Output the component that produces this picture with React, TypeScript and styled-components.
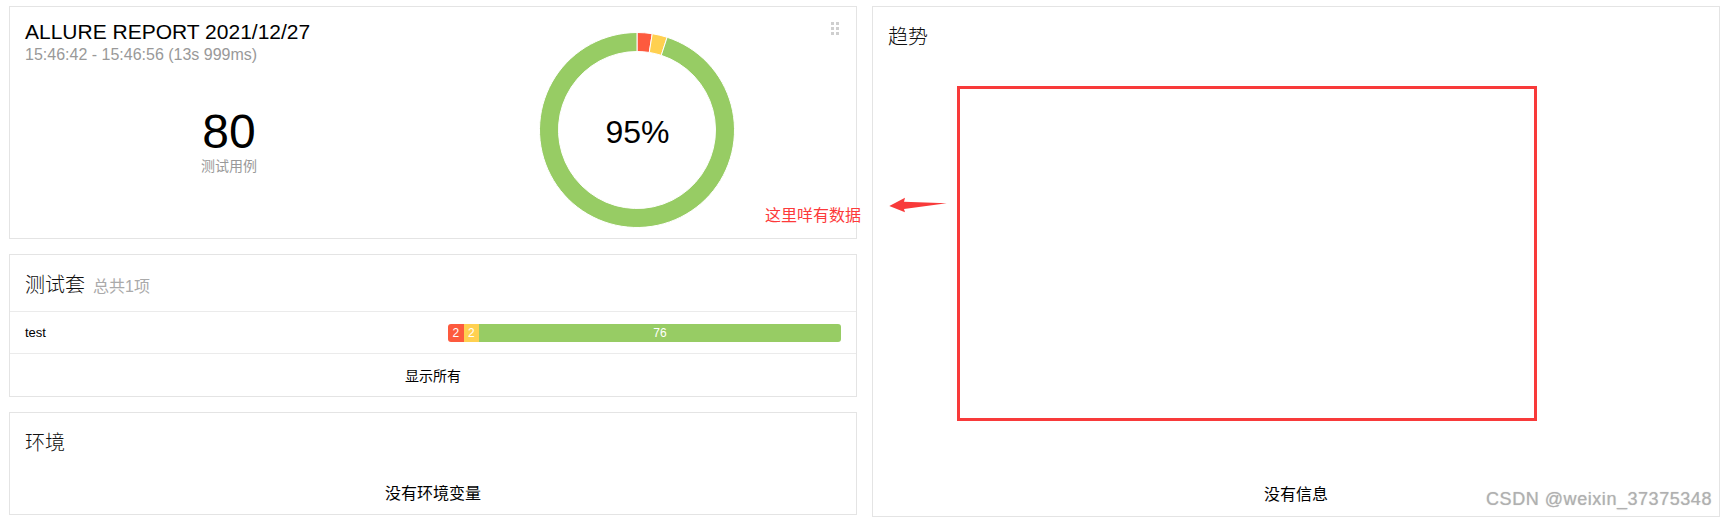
import React from "react";
import styled, { createGlobalStyle } from "styled-components";

const GlobalStyle = createGlobalStyle`
  html, body {
    margin: 0;
    padding: 0;
    background: #ffffff;
  }
  body {
    font-family: "Liberation Sans", Arial, "Noto Sans CJK SC", sans-serif;
    color: #000;
  }
  * { box-sizing: border-box; }
`;

const Page = styled.div`
  position: relative;
  display: flex;
  gap: 15px;
  height: 520px;
  padding: 6px 8px 0 9px;
  overflow: hidden;
`;

const Column = styled.div`
  display: flex;
  flex-direction: column;
  gap: 15px;
  width: 848px;
  flex: 0 0 848px;
`;

const Panel = styled.section<{ $height?: number }>`
  position: relative;
  display: flex;
  flex-direction: column;
  background: #fff;
  border: 1px solid #e4e4e4;
  ${(p) => (p.$height ? `height: ${p.$height}px;` : "")}
`;

const SummaryGrid = styled.div`
  display: grid;
  grid-template-columns: 1fr 1fr;
  height: 100%;
  padding: 0 15px;
`;

const SummaryInfo = styled.div`
  padding-top: 13px;
`;

const ReportTitle = styled.h1`
  margin: 0;
  font-size: 21px;
  line-height: 24px;
  font-weight: 400;
  color: #000;
  white-space: nowrap;
`;

const ReportTime = styled.div`
  margin-top: 2px;
  font-size: 16px;
  line-height: 18px;
  color: #999;
  white-space: nowrap;
`;

const Stat = styled.div`
  margin-top: 44px;
  display: flex;
  flex-direction: column;
  align-items: center;
`;

const StatValue = styled.div`
  font-size: 48px;
  line-height: 48px;
  color: #000;
`;

const StatLabel = styled.div`
  margin-top: 1px;
  font-size: 14px;
  line-height: 16px;
  color: #999;
  font-family: "Noto Sans CJK SC", sans-serif;
`;

const ChartCell = styled.div`
  display: flex;
  justify-content: center;
  padding-top: 25px;
`;

const Grip = styled.div`
  position: absolute;
  top: 15px;
  right: 17px;
  display: grid;
  grid-template-columns: repeat(2, 3px);
  grid-auto-rows: 3px;
  gap: 2px;
`;

const GripDot = styled.span`
  width: 3px;
  height: 3px;
  background: #cfcfcf;
`;

const PanelHeader = styled.div<{ $divided?: boolean }>`
  display: flex;
  align-items: baseline;
  gap: 8px;
  height: 57px;
  padding: 18px 15px 0;
  border-bottom: ${(p) => (p.$divided ? "1px solid #ebebeb" : "none")};
  flex: 0 0 auto;
`;

const PanelTitle = styled.h2`
  margin: 0;
  font-size: 20px;
  line-height: 22px;
  font-weight: 300;
  color: #111;
  font-family: "Noto Sans CJK SC", sans-serif;
`;

const PanelCount = styled.span`
  font-size: 16px;
  line-height: 18px;
  color: #aaa;
  font-family: "Liberation Sans", "Noto Sans CJK SC", sans-serif;
`;

const SuiteRow = styled.div`
  display: flex;
  align-items: center;
  justify-content: space-between;
  height: 42px;
  padding: 0 15px;
  border-bottom: 1px solid #ebebeb;
`;

const SuiteName = styled.span`
  font-size: 13px;
  color: #000;
`;

const StatusBar = styled.div`
  display: flex;
  width: 393px;
  height: 18px;
  border-radius: 3px;
  overflow: hidden;
`;

const Segment = styled.span<{ $color: string; $count: number }>`
  display: flex;
  align-items: center;
  justify-content: center;
  flex: ${(p) => p.$count} 1 0;
  min-width: 15.5px;
  background: ${(p) => p.$color};
  color: #fff;
  font-size: 12px;
  line-height: 18px;
`;

const PanelFooter = styled.div<{ $height: number; $size: number }>`
  display: flex;
  align-items: center;
  justify-content: center;
  height: ${(p) => p.$height}px;
  font-size: ${(p) => p.$size}px;
  color: #000;
  font-family: "Noto Sans CJK SC", sans-serif;
  flex: 0 0 auto;
`;

const ChartArea = styled.div`
  flex: 1 1 auto;
`;

const AnnotationBox = styled.div`
  position: absolute;
  left: 957px;
  top: 86px;
  width: 580px;
  height: 335px;
  border: 3px solid #f83a3a;
  pointer-events: none;
`;

const AnnotationArrow = styled.svg`
  position: absolute;
  left: 888px;
  top: 196px;
`;

const AnnotationNote = styled.div`
  position: absolute;
  left: 765px;
  top: 205px;
  font-size: 16px;
  line-height: 18px;
  color: #fd3a3a;
  font-family: "Noto Sans CJK SC", sans-serif;
  white-space: nowrap;
`;

const Watermark = styled.div`
  position: absolute;
  right: 16px;
  top: 489px;
  font-size: 18px;
  line-height: 20px;
  letter-spacing: 0.55px;
  color: #b0b0b0;
  text-shadow: 0 0 1px rgba(110, 110, 110, 0.4);
  white-space: nowrap;
`;

type Slice = { value: number; color: string };

const slices: Slice[] = [
  { value: 2, color: "#fd5a3e" },
  { value: 2, color: "#ffd050" },
  { value: 76, color: "#97cc64" },
];

const C = 98;
const R_OUT = 97.5;
const R_IN = 78.5;

function arcPath(a0: number, a1: number): string {
  const pt = (r: number, a: number) =>
    `${(C + r * Math.sin(a)).toFixed(3)},${(C - r * Math.cos(a)).toFixed(3)}`;
  const large = a1 - a0 > Math.PI ? 1 : 0;
  return [
    `M${pt(R_OUT, a0)}`,
    `A${R_OUT},${R_OUT} 0 ${large} 1 ${pt(R_OUT, a1)}`,
    `L${pt(R_IN, a1)}`,
    `A${R_IN},${R_IN} 0 ${large} 0 ${pt(R_IN, a0)}`,
    "Z",
  ].join(" ");
}

function Donut() {
  const total = slices.reduce((s, x) => s + x.value, 0);
  let acc = 0;
  return (
    <svg width="196" height="196" viewBox="0 0 196 196">
      {slices.map((s, i) => {
        const a0 = (acc / total) * Math.PI * 2;
        acc += s.value;
        const a1 = (acc / total) * Math.PI * 2;
        return (
          <path key={i} d={arcPath(a0, a1)} fill={s.color} stroke="#fff" strokeWidth={1} />
        );
      })}
      <text
        x="98.5"
        y="111"
        textAnchor="middle"
        fontSize="32"
        fontFamily="'Liberation Sans', Arial, sans-serif"
        fill="#000"
      >
        95%
      </text>
    </svg>
  );
}

const suiteSegments = [
  { count: 2, color: "#fd5a3e" },
  { count: 2, color: "#ffd050" },
  { count: 76, color: "#97cc64" },
];

export default function App() {
  return (
    <>
      <GlobalStyle />
      <Page>
        <Column>
          <Panel $height={233}>
            <SummaryGrid>
              <SummaryInfo>
                <ReportTitle>ALLURE REPORT 2021/12/27</ReportTitle>
                <ReportTime>15:46:42 - 15:46:56 (13s 999ms)</ReportTime>
                <Stat>
                  <StatValue>80</StatValue>
                  <StatLabel>测试用例</StatLabel>
                </Stat>
              </SummaryInfo>
              <ChartCell>
                <Donut />
              </ChartCell>
            </SummaryGrid>
            <Grip>
              {Array.from({ length: 6 }).map((_, i) => (
                <GripDot key={i} />
              ))}
            </Grip>
          </Panel>

          <Panel>
            <PanelHeader $divided>
              <PanelTitle>测试套</PanelTitle>
              <PanelCount>总共1项</PanelCount>
            </PanelHeader>
            <SuiteRow>
              <SuiteName>test</SuiteName>
              <StatusBar>
                {suiteSegments.map((s, i) => (
                  <Segment key={i} $color={s.color} $count={s.count}>
                    {s.count}
                  </Segment>
                ))}
              </StatusBar>
            </SuiteRow>
            <PanelFooter $height={42} $size={14}>
              显示所有
            </PanelFooter>
          </Panel>

          <Panel>
            <PanelHeader>
              <PanelTitle>环境</PanelTitle>
            </PanelHeader>
            <PanelFooter $height={44} $size={16}>
              没有环境变量
            </PanelFooter>
          </Panel>
        </Column>

        <Column>
          <Panel $height={511}>
            <PanelHeader>
              <PanelTitle>趋势</PanelTitle>
            </PanelHeader>
            <ChartArea />
            <PanelFooter $height={46} $size={16}>
              没有信息
            </PanelFooter>
          </Panel>
        </Column>

        <AnnotationNote>这里咩有数据</AnnotationNote>
        <AnnotationArrow width="60" height="18" viewBox="0 0 60 18">
          <path
            d="M1.3,10 L17,1.7 L16,5.7 L58.7,7.2 L16,13 L17,16.3 Z"
            fill="#f83a3a"
          />
        </AnnotationArrow>
        <AnnotationBox />
        <Watermark>CSDN @weixin_37375348</Watermark>
      </Page>
    </>
  );
}
